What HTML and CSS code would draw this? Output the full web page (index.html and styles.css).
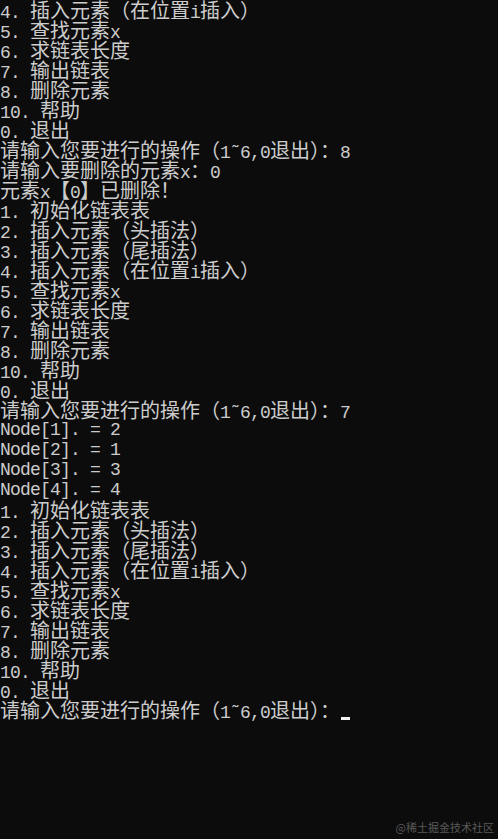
FILE: index.html
```html
<!DOCTYPE html>
<html lang="zh-CN">
<head>
<meta charset="utf-8">
<title>console</title>
<link rel="stylesheet" href="styles.css">
</head>
<body>
<div class="console">
<div class="ln">4. <span class="c">插入元素（在位置</span>i<span class="c">插入）</span></div>
<div class="ln">5. <span class="c">查找元素</span>x</div>
<div class="ln">6. <span class="c">求链表长度</span></div>
<div class="ln">7. <span class="c">输出链表</span></div>
<div class="ln">8. <span class="c">删除元素</span></div>
<div class="ln">10. <span class="c">帮助</span></div>
<div class="ln">0. <span class="c">退出</span></div>
<div class="ln"><span class="c">请输入您要进行的操作（</span>1˜6,0<span class="c">退出）：</span>8</div>
<div class="ln"><span class="c">请输入要删除的元素</span>x<span class="c">：</span>0</div>
<div class="ln"><span class="c">元素</span>x<span class="c">【</span>0<span class="c">】已删除！</span></div>
<div class="ln">1. <span class="c">初始化链表表</span></div>
<div class="ln">2. <span class="c">插入元素（头插法）</span></div>
<div class="ln">3. <span class="c">插入元素（尾插法）</span></div>
<div class="ln">4. <span class="c">插入元素（在位置</span>i<span class="c">插入）</span></div>
<div class="ln">5. <span class="c">查找元素</span>x</div>
<div class="ln">6. <span class="c">求链表长度</span></div>
<div class="ln">7. <span class="c">输出链表</span></div>
<div class="ln">8. <span class="c">删除元素</span></div>
<div class="ln">10. <span class="c">帮助</span></div>
<div class="ln">0. <span class="c">退出</span></div>
<div class="ln"><span class="c">请输入您要进行的操作（</span>1˜6,0<span class="c">退出）：</span>7</div>
<div class="ln">Node[1]. = 2</div>
<div class="ln">Node[2]. = 1</div>
<div class="ln">Node[3]. = 3</div>
<div class="ln">Node[4]. = 4</div>
<div class="ln">1. <span class="c">初始化链表表</span></div>
<div class="ln">2. <span class="c">插入元素（头插法）</span></div>
<div class="ln">3. <span class="c">插入元素（尾插法）</span></div>
<div class="ln">4. <span class="c">插入元素（在位置</span>i<span class="c">插入）</span></div>
<div class="ln">5. <span class="c">查找元素</span>x</div>
<div class="ln">6. <span class="c">求链表长度</span></div>
<div class="ln">7. <span class="c">输出链表</span></div>
<div class="ln">8. <span class="c">删除元素</span></div>
<div class="ln">10. <span class="c">帮助</span></div>
<div class="ln">0. <span class="c">退出</span></div>
<div class="ln"><span class="c">请输入您要进行的操作（</span>1˜6,0<span class="c">退出）：</span><span class="cursor"></span></div>
</div>
<div class="mark">@稀土掘金技术社区</div>
</body>
</html>
```

FILE: styles.css
```css
html, body {
  margin: 0;
  padding: 0;
  background: #0c0c0c;
}
body {
  width: 498px;
  height: 839px;
  overflow: hidden;
  position: relative;
}
.console {
  color: #cccccc;
  font-family: "Liberation Mono", "Noto Sans CJK SC", monospace;
  font-size: 18px;
  letter-spacing: -0.8px;
  line-height: 20px;
}
.ln {
  height: 20px;
  white-space: pre;
  overflow: visible;
}
.c {
  font-family: "Noto Sans CJK SC", sans-serif;
  font-size: 20px;
  letter-spacing: 0;
  line-height: 20px;
}
.cursor {
  display: inline-block;
  width: 9px;
  height: 3px;
  margin-left: 1px;
  background: #f2f2f2;
  vertical-align: -2px;
}
.mark {
  position: absolute;
  right: 4px;
  bottom: 5px;
  color: #595959;
  font-family: "Noto Sans CJK SC", sans-serif;
  font-size: 11px;
  line-height: 13px;
}
```
